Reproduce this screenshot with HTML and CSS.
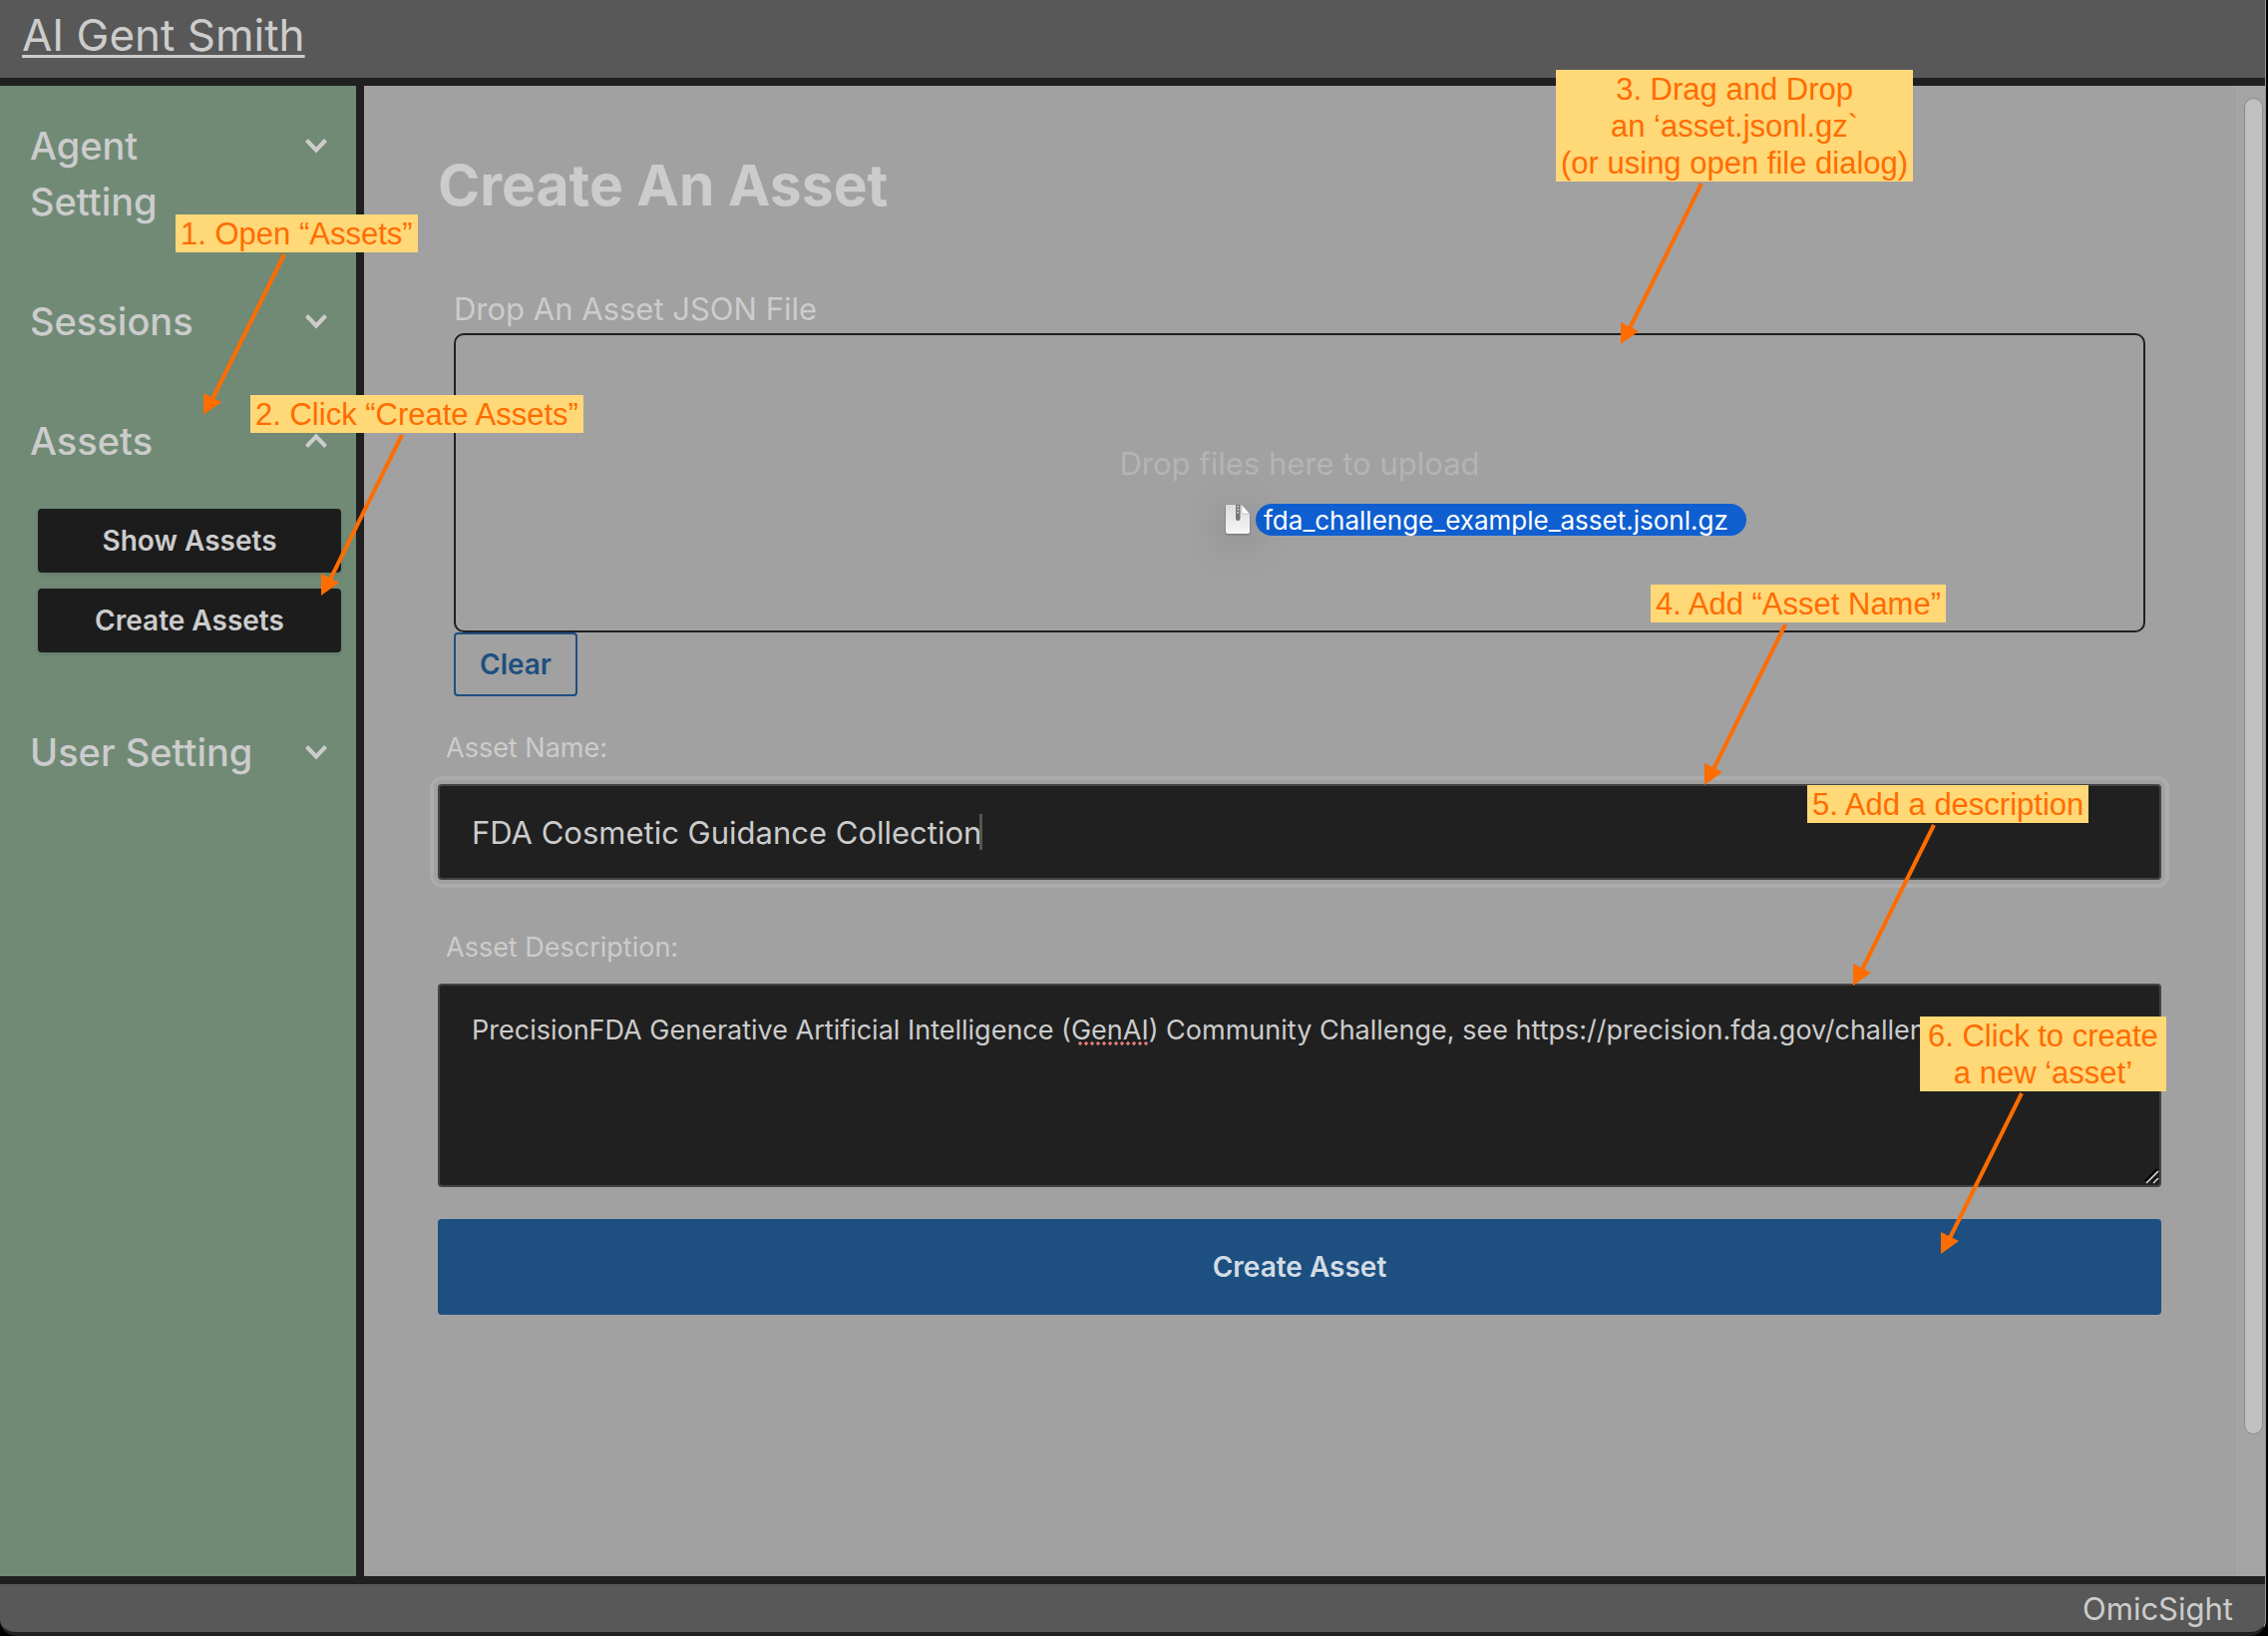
FILE: index.html
```html
<!DOCTYPE html>
<html lang="en">
<head>
<meta charset="utf-8">
<title>AI Gent Smith</title>
<link rel="stylesheet" href="styles.css">
</head>
<body>
<svg class="defs" aria-hidden="true">
  <symbol id="chevron" viewBox="0 0 24 16"><path d="M2.5 2.5 12 12.5 21.500 2.500" fill="none" stroke="currentColor" stroke-width="4"/></symbol>
  <symbol id="arrow" viewBox="0 0 90 166"><path d="M84 2 12 147" stroke="currentColor" stroke-width="4"/><path d="M3 163V141L21 150Z" fill="currentColor"/></symbol>
</svg>
<div class="window">
  <header class="topbar"><a class="brand" href="#">AI Gent Smith</a></header>
  <div class="body">
    <nav class="sidebar">
      <details class="group">
        <summary class="group-title"><span>Agent Setting</span><svg class="chevron"><use href="#chevron"/></svg></summary>
      </details>
      <details class="group">
        <summary class="group-title"><span>Sessions</span><svg class="chevron"><use href="#chevron"/></svg></summary>
      </details>
      <details class="group" open>
        <summary class="group-title"><span>Assets</span><svg class="chevron"><use href="#chevron"/></svg></summary>
        <div class="group-items">
          <button class="nav-button" type="button">Show Assets</button>
          <button class="nav-button" type="button">Create Assets</button>
        </div>
      </details>
      <details class="group">
        <summary class="group-title"><span>User Setting</span><svg class="chevron"><use href="#chevron"/></svg></summary>
      </details>
    </nav>
    <main class="content">
      <h1 class="title">Create An Asset</h1>
      <section class="upload">
        <h2 class="upload-label">Drop An Asset JSON File</h2>
        <div class="dropzone">
          <p class="drop-hint">Drop files here to upload</p>
          <div class="dragged-file">
            <svg class="file-icon" viewBox="0 0 24 30">
              <defs><linearGradient id="paper" x1="0" y1="0" x2="0" y2="1"><stop offset="0" stop-color="#dcdcdc"/><stop offset="1" stop-color="#f6f6f6"/></linearGradient></defs>
              <path d="M1 0H16L24 9V27Q24 29 22 29H2Q0 29 0 27V1Q0 0 1 0Z" fill="url(#paper)"/>
              <path d="M16 0 24 9H17.500Q16 9 16 7.500Z" fill="#fff" stroke="#b0b0b0" stroke-width=".7"/>
              <path d="M10 0H14.500V14Q14.500 16 12.200 16T10 14Z" fill="#777"/>
              <path d="M12.200 1V9" stroke="#ddd" stroke-width="1.500" stroke-dasharray="1.500 1.500"/>
            </svg>
            <span class="file-name">fda_challenge_example_asset.jsonl.gz</span>
          </div>
        </div>
        <button class="clear-button" type="button">Clear</button>
      </section>
      <form class="asset-form">
        <label class="field-label" for="asset-name">Asset Name:</label>
        <div class="field name-field">
          <input class="text-input" id="asset-name" type="text" value="FDA Cosmetic Guidance Collection">
          <span class="caret"></span>
        </div>
        <label class="field-label" for="asset-description">Asset Description:</label>
        <div class="field description-field">
          <textarea class="text-area" id="asset-description" spellcheck="false">PrecisionFDA Generative Artificial Intelligence (GenAI) Community Challenge, see https://precision.fda.gov/challenges</textarea>
          <span class="spelling-mark"></span>
          <svg class="grip" viewBox="0 0 16 16"><path d="M1 12 13 0M8 13 13 8" stroke="#000" stroke-width="2"/><path d="M2 14 14 2M9 14 14 9" stroke="#ddd" stroke-width="1.500"/></svg>
        </div>
        <button class="submit-button" type="button">Create Asset</button>
      </form>
    </main>
    <div class="scrollbar"><div class="thumb"></div></div>
  </div>
  <footer class="footer">OmicSight</footer>
</div>
<div class="note note-1">1. Open “Assets”<svg class="arrow"><use href="#arrow"/></svg></div>
<div class="note note-2">2. Click “Create Assets”<svg class="arrow"><use href="#arrow"/></svg></div>
<div class="note note-3">3. Drag and Drop<br>an ‘asset.jsonl.gz`<br>(or using open file dialog)<svg class="arrow"><use href="#arrow"/></svg></div>
<div class="note note-4">4. Add “Asset Name”<svg class="arrow"><use href="#arrow"/></svg></div>
<div class="note note-5">5. Add a description<svg class="arrow"><use href="#arrow"/></svg></div>
<div class="note note-6">6. Click to create<br>a new ‘asset’<svg class="arrow"><use href="#arrow"/></svg></div>
</body>
</html>
```
FILE: styles.css
```css
* { box-sizing: border-box; }

body {
  margin: 0;
  background: #000;
  color: #ccc;
  font-family: Inter, "Liberation Sans", sans-serif;
  position: relative;
}

button, input, textarea { font-family: inherit; margin: 0; }

.defs { position: absolute; width: 0; height: 0; }

/* Window frame */
.window {
  display: flex;
  flex-direction: column;
  min-height: 100vh;
  margin-right: 2px;
  background: #202020;
  border-bottom: 4px solid #202020;
  border-right: 1px solid #999;
  border-radius: 0 0 16px 16px;
  overflow: hidden;
}

.topbar {
  height: 86px;
  padding: 5px 22px;
  background: #585858;
  border-bottom: 8px solid #202020;
}

.brand {
  color: inherit;
  font-size: 44px;
  line-height: 60px;
  text-decoration-thickness: 3px;
  text-underline-offset: 4px;
  text-decoration-skip-ink: none;
}

.body { display: flex; flex: 1; }

.footer {
  height: 56px;
  padding: 1px 32px 0;
  border-top: 8px solid #202020;
  background: #585858;
  font-size: 31px;
  line-height: 48px;
  text-align: right;
}

/* Sidebar */
.sidebar {
  flex: 0 0 365px;
  background: #708a75;
  border-right: 8px solid #202020;
}

.group-title {
  display: flex;
  justify-content: space-between;
  padding: 32px 28px 32px 30px;
  font-size: 38px;
  font-weight: 500;
  line-height: 56px;
  list-style: none;
}

.group-title span { max-width: 240px; }

.chevron {
  flex: none;
  width: 24px;
  height: 16px;
  margin-top: 20px;
}

.group[open] .chevron { transform: rotate(180deg); }

.group-items {
  display: flex;
  flex-direction: column;
  gap: 16px;
  padding: 8px 15px 40px 38px;
}

.nav-button {
  height: 64px;
  border: 0;
  border-radius: 4px;
  background: #1c1c1c;
  color: #ccc;
  font-size: 28px;
  font-weight: 600;
  box-shadow: 0 2px 4px rgba(0, 0, 0, .1);
}

/* Main column */
.content {
  flex: 1;
  padding: 62px 76px 64px 74px;
  background: #a1a1a1;
}

.title {
  margin: 0 0 62px;
  font-size: 57px;
  font-weight: 700;
  line-height: 76px;
}

.upload { padding: 0 16px; }

.upload-label {
  margin: 0;
  font-size: 31px;
  font-weight: 400;
  line-height: 48px;
}

.dropzone {
  position: relative;
  display: flex;
  align-items: center;
  justify-content: center;
  height: 300px;
  padding-bottom: 40px;
  border: 2px solid #202020;
  border-radius: 10px;
}

.drop-hint {
  margin: 0;
  color: #b4b4b4;
  font-size: 31px;
}

/* File following the pointer while it is dragged */
.dragged-file {
  position: absolute;
  left: 772px;
  top: 169px;
  display: flex;
  align-items: center;
  gap: 6px;
}

.file-icon {
  width: 24px;
  height: 30px;
  filter: drop-shadow(0 1px 1px rgba(0, 0, 0, .3)) drop-shadow(0 8px 20px rgba(0, 0, 0, .2));
}

.file-name {
  padding: 1px 18px 0 8px;
  border-radius: 16px;
  background: #0f5fd0;
  color: #fff;
  font-size: 26px;
  line-height: 31px;
}

.clear-button {
  display: block;
  width: 124px;
  height: 64px;
  border: 2px solid #1d4f80;
  border-radius: 4px;
  background: none;
  color: #1d4f80;
  font-size: 28px;
  font-weight: 600;
}

/* Form */
.asset-form {
  display: flex;
  flex-direction: column;
  padding-top: 28px;
}

.field-label {
  padding: 0 8px;
  font-size: 27px;
  line-height: 48px;
}

.field { position: relative; display: flex; }

.text-input, .text-area {
  flex: 1;
  padding: 0 32px;
  border: 2px solid #434343;
  border-radius: 4px;
  background: #202020;
  color: #ccc;
}

.name-field { margin: 12px 0 44px; }

.text-input {
  height: 96px;
  font-size: 31px;
  outline: 4px solid #acacac;
  outline-offset: 4px;
}

.caret {
  position: absolute;
  left: 543px;
  top: 30px;
  width: 3px;
  height: 36px;
  background: #555;
}

.description-field { margin: 12px 0 32px; }

.text-area {
  height: 204px;
  padding-top: 27px;
  font-size: 27px;
  line-height: 36px;
  resize: none;
}

.spelling-mark {
  position: absolute;
  left: 641px;
  top: 58px;
  width: 72px;
  height: 4px;
  background: radial-gradient(circle, #e07a78 40%, transparent 55%) 0 0 / 6px 4px;
}

.grip {
  position: absolute;
  right: 1px;
  bottom: 2px;
  width: 16px;
  height: 16px;
}

.submit-button {
  height: 96px;
  border: 0;
  border-radius: 4px;
  background: #1d4f80;
  color: #d2dce6;
  font-size: 28px;
  font-weight: 600;
}

.scrollbar {
  display: flex;
  flex: 0 0 28px;
  padding: 12px 2px 142px 6px;
  border-left: 1px solid #a9a9a9;
  background: #a4a4a4;
}

.thumb {
  flex: 1;
  border: 1px solid #8a8a8a;
  border-radius: 10px;
  background: #c0c0c0;
}

/* Callouts pinned over the window */
.note {
  position: absolute;
  padding: 1px 5px 0;
  background: #ffd877;
  color: #ff6c00;
  font-family: "Liberation Sans", sans-serif;
  font-size: 31px;
  line-height: 37px;
  text-align: center;
  white-space: nowrap;
}

.arrow {
  position: absolute;
  top: 100%;
  width: 90px;
  height: 166px;
}

.note-1 { left: 176px; top: 215px; }
.note-1 .arrow { left: 25px; }
.note-2 { left: 251px; top: 396px; }
.note-2 .arrow { left: 68px; }
.note-3 { left: 1560px; top: 70px; }
.note-3 .arrow { left: 62px; }
.note-4 { left: 1655px; top: 586px; }
.note-4 .arrow { left: 51px; }
.note-5 { left: 1812px; top: 787px; }
.note-5 .arrow { left: 43px; }
.note-6 { left: 1925px; top: 1019px; padding: 1px 8px 0; }
.note-6 .arrow { left: 18px; }
```
